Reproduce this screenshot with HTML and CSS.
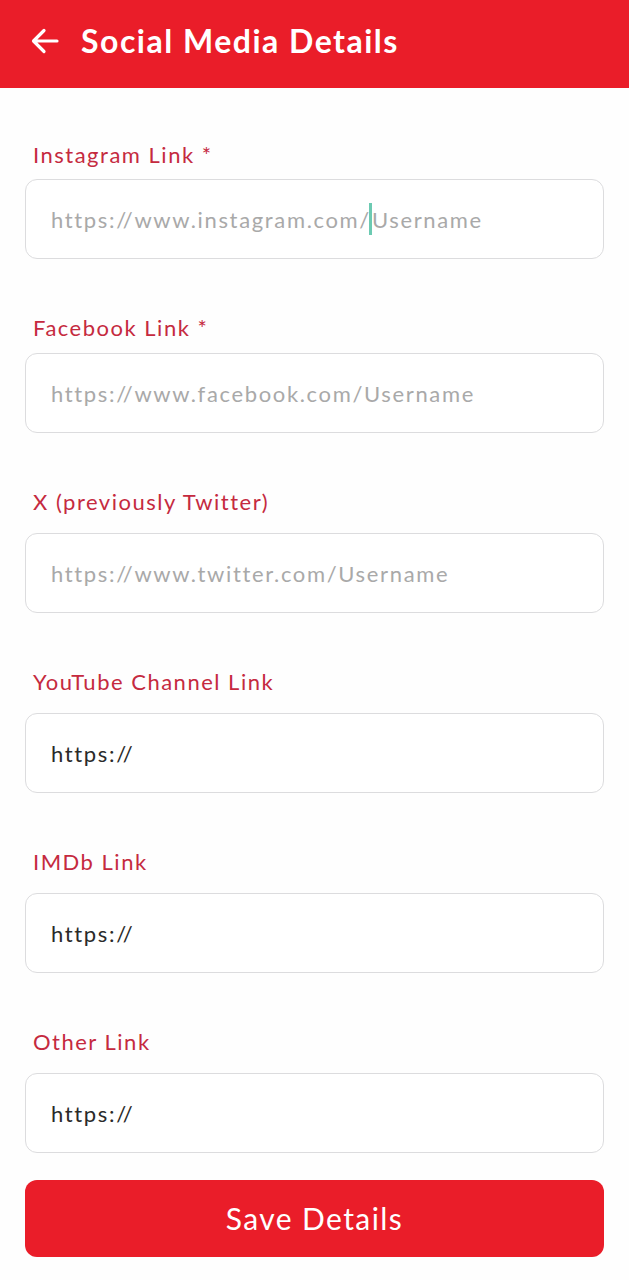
FILE: index.html
```html
<!DOCTYPE html>
<html lang="en">
<head>
<meta charset="utf-8">
<title>Social Media Details</title>
<link rel="stylesheet" href="styles.css">
</head>
<body>
<header class="appbar">
  <svg class="appbar__back" width="28" height="28" viewBox="0 0 28 28" aria-hidden="true">
    <path d="M26 14H3M13 3.5L2.5 14L13 24.5" fill="none" stroke="#fff" stroke-width="3.2" stroke-linecap="round" stroke-linejoin="round"/>
  </svg>
  <h1 class="appbar__title">Social Media Details</h1>
</header>
<main class="form">
  <div class="fields">
    <div class="field field--first">
      <label class="field__label">Instagram Link *</label>
      <div class="field__input field__input--placeholder">https://www.instagram.com/<span class="caret"></span>Username</div>
    </div>
    <div class="field field--second">
      <label class="field__label">Facebook Link *</label>
      <div class="field__input field__input--placeholder">https://www.facebook.com/Username</div>
    </div>
    <div class="field">
      <label class="field__label">X (previously Twitter)</label>
      <div class="field__input field__input--placeholder">https://www.twitter.com/Username</div>
    </div>
    <div class="field">
      <label class="field__label">YouTube Channel Link</label>
      <div class="field__input">https://</div>
    </div>
    <div class="field">
      <label class="field__label">IMDb Link</label>
      <div class="field__input">https://</div>
    </div>
    <div class="field">
      <label class="field__label">Other Link</label>
      <div class="field__input">https://</div>
    </div>
  </div>
  <button class="save-btn" type="button">Save Details</button>
</main>
</body>
</html>
```
FILE: styles.css
```css
* { box-sizing: border-box; }
html, body { margin: 0; padding: 0; }
body {
  background: #fefefe;
  font-family: Lato, "Noto Sans", sans-serif;
  width: 629px;
  height: 1280px;
  overflow: hidden;
}
.appbar {
  height: 88px;
  background: #ea1d29;
  display: flex;
  align-items: center;
  padding: 0 0 6px 31px;
}
.appbar__back { display: block; flex: none; }
.appbar__title {
  margin: 0 0 0 22px;
  color: #fff;
  font-size: 32px;
  font-weight: 700;
  line-height: 40px;
  letter-spacing: 1.5px;
}
.form {
  padding: 54px 25px 0 25px;
}
.fields {
  display: flex;
  flex-direction: column;
  gap: 56px;
}
.field { display: flex; flex-direction: column; }
.field__label {
  display: block;
  color: #c52a3f;
  font-size: 22px;
  line-height: 26px;
  letter-spacing: 1.5px;
  padding-left: 8px;
  margin-bottom: 18px;
}
.field--first .field__label { margin-bottom: 11px; }
.field--second .field__label { margin-bottom: 12px; }
.field__input {
  height: 80px;
  border: 1px solid #dcdcde;
  border-radius: 12px;
  background: #fff;
  display: flex;
  align-items: center;
  padding-left: 25px;
  font-size: 22px;
  letter-spacing: 1.65px;
  color: #2a2a2a;
  white-space: pre;
}
.field__input--placeholder { color: #a9a9a9; }
.caret {
  display: inline-block;
  width: 3px;
  height: 32px;
  background: #6ccab2;
  margin: 0 0 0 -2px;
}
.save-btn {
  display: block;
  width: 100%;
  margin-top: 27px;
  height: 77px;
  border: 0;
  border-radius: 12px;
  background: #ea1d29;
  color: #fff;
  font-family: Lato, "Noto Sans", sans-serif;
  font-size: 30px;
  letter-spacing: 1.4px;
  padding: 0 0 2px;
}
```
